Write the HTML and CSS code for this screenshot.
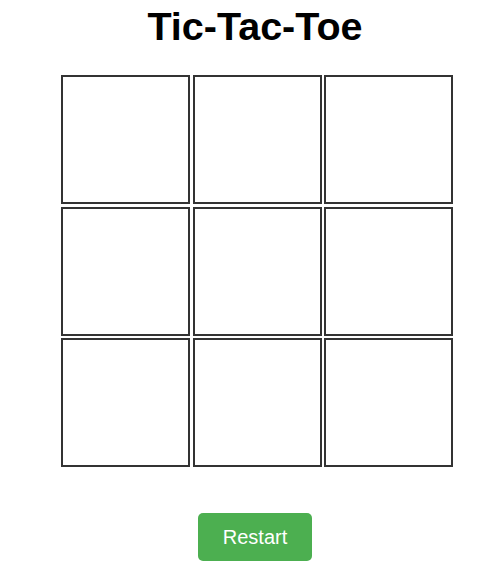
FILE: index.html
```html
<!DOCTYPE html>
<html lang="en">
<head>
<meta charset="utf-8">
<title>Tic-Tac-Toe</title>
<link rel="stylesheet" href="styles.css">
</head>
<body>
<main class="game">
  <h1 class="title">Tic-Tac-Toe</h1>
  <div class="board">
    <div class="cell"></div>
    <div class="cell"></div>
    <div class="cell"></div>
    <div class="cell"></div>
    <div class="cell"></div>
    <div class="cell"></div>
    <div class="cell"></div>
    <div class="cell"></div>
    <div class="cell"></div>
  </div>
  <button class="restart" type="button">Restart</button>
</main>
</body>
</html>
```
FILE: styles.css
```css
html, body {
  margin: 0;
  padding: 0;
  background: #ffffff;
}

body {
  font-family: "Liberation Sans", Arial, sans-serif;
  overflow: hidden;
}

.game {
  display: flex;
  flex-direction: column;
  align-items: center;
  padding-left: 19px;
  padding-top: 4px;
}

.title {
  margin: 0 2px 0 0;
  font-size: 39.5px;
  line-height: 44px;
  font-weight: bold;
  color: #000000;
}

.board {
  margin-top: 27px;
  display: grid;
  grid-template-columns: repeat(3, 129px);
  grid-template-rows: repeat(3, 129px);
  gap: 2.5px;
  margin-left: 2px;
}

.cell {
  box-sizing: border-box;
  border: 2px solid #333333;
  background: #ffffff;
}

.restart {
  margin: 46px 2px 0 0;
  box-sizing: border-box;
  width: 114px;
  height: 48px;
  border: none;
  border-radius: 5px;
  background: #4caf50;
  color: #ffffff;
  font-family: "Liberation Sans", Arial, sans-serif;
  font-size: 20px;
  padding: 0;
  cursor: pointer;
}
```
